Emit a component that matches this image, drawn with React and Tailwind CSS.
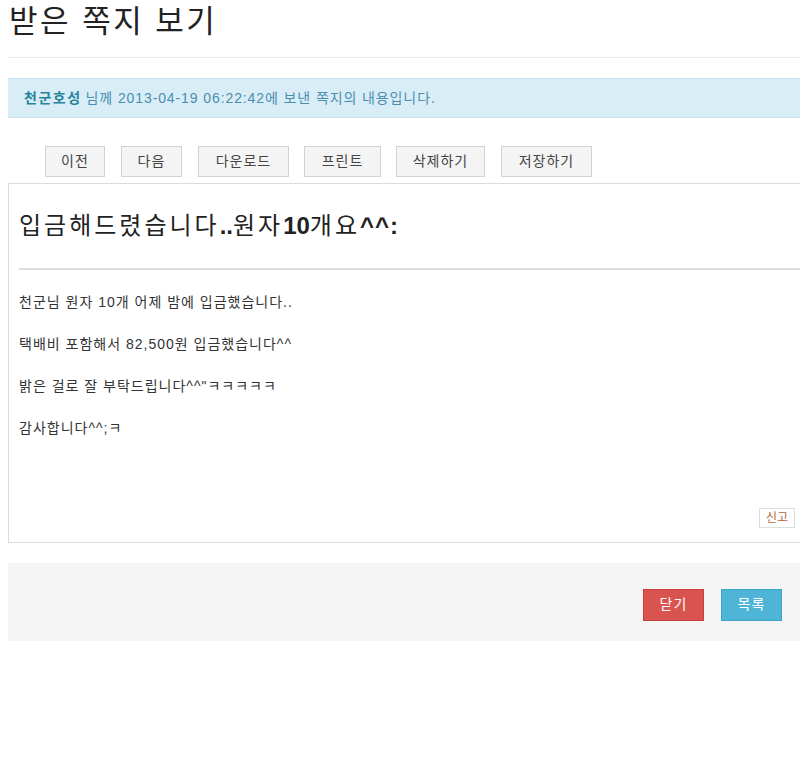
export default function App() {
  const font = { fontFamily: '"Liberation Sans", "Noto Sans CJK KR", sans-serif' };
  const btns = [
    ["이전", "w-[60px]", "ml-[37px]"],
    ["다음", "w-[61px]", "ml-[16px]"],
    ["다운로드", "w-[91px]", "ml-[16px]"],
    ["프린트", "w-[77px]", "ml-[15px]"],
    ["삭제하기", "w-[89px]", "ml-[15px]"],
    ["저장하기", "w-[91px]", "ml-[16px]"],
  ];
  return (
    <div className="bg-white w-[800px] h-[760px] overflow-hidden text-[#333]" style={font}>
      <div className="pl-2">
        <h1 className="text-[31px] leading-[36px] pt-[4px] pl-[1px] font-normal tracking-[2.5px] text-[#222]">받은 쪽지 보기</h1>
        <div className="mt-[17px] h-px bg-[#eeeeee]" />
        <div className="mt-[20px] h-[40px] bg-[#d9edf7] border-t border-b border-[#c6e4f0] flex items-center pl-[16px] text-[14px] text-[#4a8db0] tracking-[0.9px]">
          <span className="font-bold text-[#24859c] tracking-[1.5px]">천군호성</span>
          <span className="ml-[4px]">님께 2013-04-19 06:22:42에 보낸 쪽지의 내용입니다.</span>
        </div>
        <div className="flex mt-[28px]">
          {btns.map(([t, w, m]) => (
            <div
              key={t}
              className={`${w} ${m} h-[31px] flex items-center justify-center bg-[#f4f4f4] border border-[#d3d3d3] text-[14px] text-[#444] tracking-[1px]`}
            >
              {t}
            </div>
          ))}
        </div>
        <div className="mt-[6px] border border-r-0 border-[#dcdcdc] h-[360px] pl-[10px] flex flex-col">
          <div className="h-[84px] flex items-center text-[24px] text-[#222] tracking-[3px]">
            <span>입금해드렸습니다</span>
            <span className="font-bold tracking-normal">..</span>
            <span>원자</span>
            <span className="font-bold tracking-normal">10</span>
            <span>개요</span>
            <span className="font-bold tracking-[1px]">^^:</span>
          </div>
          <div className="h-[2px] bg-[#dddddd]" />
          <div className="pt-[22px] text-[14px] leading-[20px] text-[#333] tracking-[1px] flex flex-col gap-[22px]">
            <p>천군님 원자 10개 어제 밤에 입금했습니다..</p>
            <p>택배비 포함해서 82,500원 입금했습니다^^</p>
            <p>밝은 걸로 잘 부탁드립니다^^"ㅋㅋㅋㅋㅋ</p>
            <p>감사합니다^^;ㅋ</p>
          </div>
          <div className="mt-auto mb-[14px] flex justify-end pr-[5px]">
            <div className="h-[20px] px-[6px] flex items-center border border-[#dedede] text-[12px] text-[#b5683a] bg-white">신고</div>
          </div>
        </div>
        <div className="mt-[20px] h-[78px] bg-[#f5f5f5] flex items-center justify-end pr-[18px] pt-[5px] gap-[17px]">
          <div className="w-[61px] h-[32px] flex items-center justify-center bg-[#d9534f] border border-[#c9403c] text-white text-[14px] tracking-[1px]">닫기</div>
          <div className="w-[61px] h-[32px] flex items-center justify-center bg-[#4fb5d7] border border-[#3ea6c8] text-white text-[14px] tracking-[1px]">목록</div>
        </div>
      </div>
    </div>
  );
}
